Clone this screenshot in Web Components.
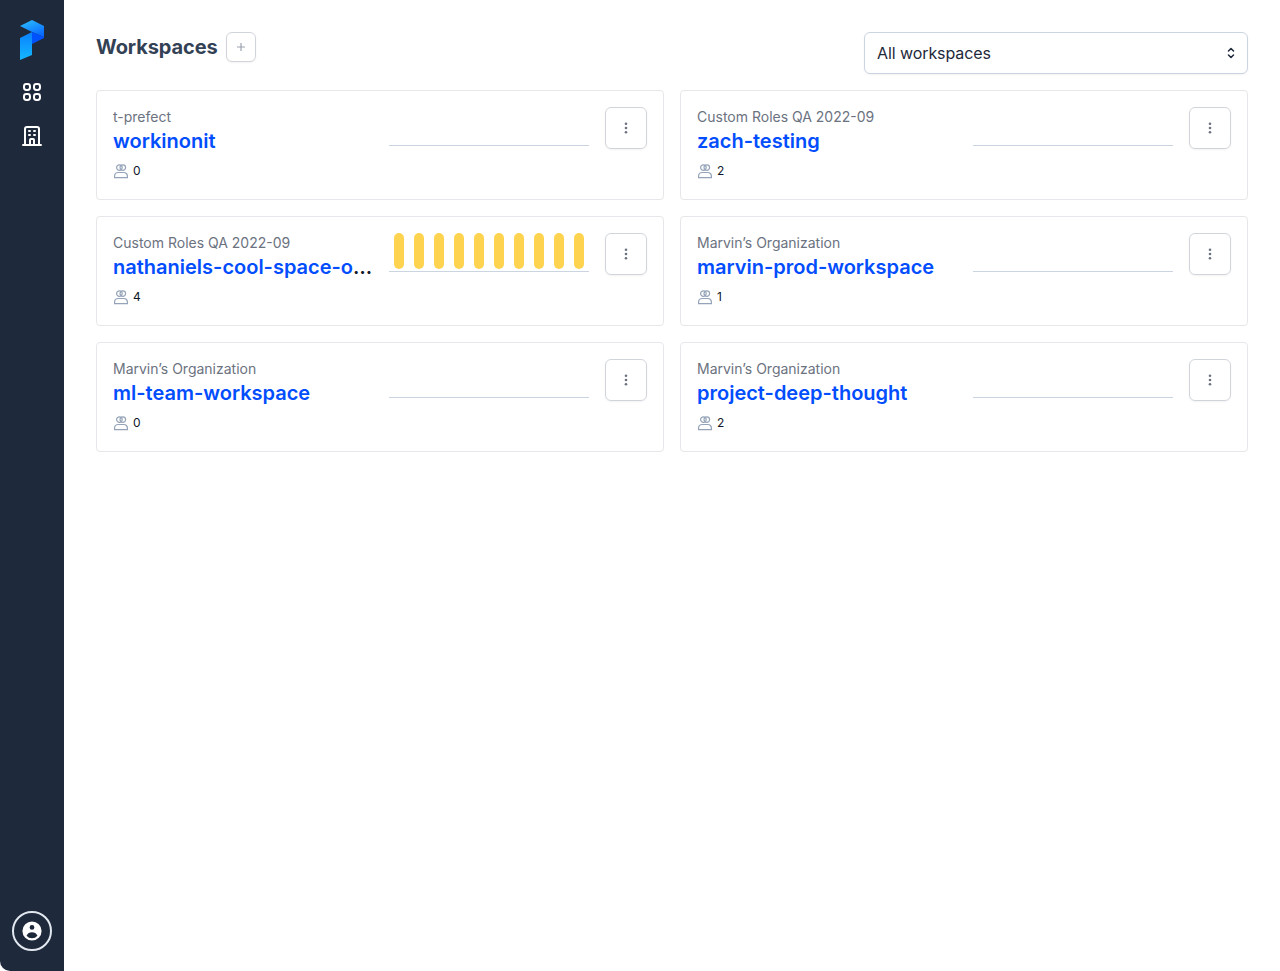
<!DOCTYPE html>
<html>
<head>
<meta charset="utf-8">
<style>
  html, body { margin: 0; height: 100%; background: #fff; }
  body { font-family: Inter, sans-serif; }
</style>
</head>
<body>
<app-shell>
  <side-nav slot="nav"></side-nav>
  <page-header></page-header>
  <workspace-grid>
    <workspace-card org="t-prefect" name="workinonit" members="0"></workspace-card>
    <workspace-card org="Custom Roles QA 2022-09" name="zach-testing" members="2"></workspace-card>
    <workspace-card org="Custom Roles QA 2022-09" name="nathaniels-cool-space-of-wonders" members="4" bars="10"></workspace-card>
    <workspace-card org="Marvin’s Organization" name="marvin-prod-workspace" members="1"></workspace-card>
    <workspace-card org="Marvin’s Organization" name="ml-team-workspace" members="0"></workspace-card>
    <workspace-card org="Marvin’s Organization" name="project-deep-thought" members="2"></workspace-card>
  </workspace-grid>
</app-shell>
<script>
class AppShell extends HTMLElement {
  constructor() {
    super();
    this.attachShadow({ mode: 'open' });
    this.shadowRoot.innerHTML = `
      <style>
        :host { display: flex; height: 971px; overflow: hidden; border-bottom-left-radius: 10px; }
        main { flex: 1; min-width: 0; padding: 32px 32px 0; }
      </style>
      <slot name="nav"></slot>
      <main><slot></slot></main>
    `;
  }
}

class SideNav extends HTMLElement {
  constructor() {
    super();
    this.attachShadow({ mode: 'open' });
    this.shadowRoot.innerHTML = `
      <style>
        :host { display: flex; flex-direction: column; align-items: center; width: 64px; flex: none; background: #1e293b; box-sizing: border-box; padding: 20px 0 20px; }
        svg { display: block; }
        .logo { margin-bottom: 20px; }
        .icon { margin-bottom: 20px; color: #fff; }
        .user { margin-top: auto; width: 40px; height: 40px; box-sizing: border-box; border: 2px solid #e2e8f0; border-radius: 50%; display: flex; align-items: center; justify-content: center; color: #fff; }
      </style>
      <svg class="logo" width="24" height="40" viewBox="0 0 24 40">
        <defs>
          <linearGradient id="a" x1="0" y1="0" x2="0.6" y2="1"><stop offset="0" stop-color="#2ec4ff"/><stop offset="1" stop-color="#0a6cff"/></linearGradient>
          <linearGradient id="b" x1="0.5" y1="0" x2="0.5" y2="1"><stop offset="0" stop-color="#0a80ff"/><stop offset="1" stop-color="#14b8ff"/></linearGradient>
        </defs>
        <path d="M0 6 L12 0 L24 6 L24 17 L12 12 Z" fill="url(#a)"/>
        <path d="M12 12 L24 17 L24 18 L12 24 Z" fill="#0052ff"/>
        <path d="M0 18 L12 12 L12 35 L0 40 Z" fill="url(#b)"/>
      </svg>
      <svg class="icon" width="24" height="24" viewBox="0 0 24 24" fill="none" stroke="currentColor" stroke-width="2">
        <rect x="4" y="4" width="6" height="6" rx="2.4"/><rect x="14" y="4" width="6" height="6" rx="2.4"/>
        <rect x="4" y="14" width="6" height="6" rx="2.4"/><rect x="14" y="14" width="6" height="6" rx="2.4"/>
      </svg>
      <svg class="icon" width="24" height="24" viewBox="0 0 24 24" fill="none" stroke="currentColor" stroke-width="2" stroke-linecap="round" stroke-linejoin="round">
        <path d="M19 21V5a2 2 0 0 0-2-2H7a2 2 0 0 0-2 2v16m14 0h2m-2 0h-5m-9 0H3m2 0h5M9 7h1m-1 4h1m4-4h1m-1 4h1m-5 10v-5a1 1 0 0 1 1-1h2a1 1 0 0 1 1 1v5m-4 0h4"/>
      </svg>
      <div class="user">
        <svg width="24" height="24" viewBox="0 0 20 20" fill="currentColor">
          <path fill-rule="evenodd" d="M18 10a8 8 0 1 1-16 0 8 8 0 0 1 16 0zm-6-3a2 2 0 1 1-4 0 2 2 0 0 1 4 0zm-2 4a5 5 0 0 0-4.546 2.916A5.986 5.986 0 0 0 10 16a5.986 5.986 0 0 0 4.546-2.084A5 5 0 0 0 10 11z" clip-rule="evenodd"/>
        </svg>
      </div>
    `;
  }
}

class PageHeader extends HTMLElement {
  constructor() {
    super();
    this.attachShadow({ mode: 'open' });
    this.shadowRoot.innerHTML = `
      <style>
        :host { display: flex; justify-content: space-between; align-items: flex-start; height: 42px; margin-bottom: 16px; }
        .title { display: flex; align-items: center; gap: 8px; height: 30px; }
        h1 { margin: 0; font: 700 20px/30px Inter, sans-serif; color: #334155; letter-spacing: -0.1px; }
        .add { width: 30px; height: 30px; box-sizing: border-box; border: 1px solid #d1d5db; border-radius: 6px; background: #fff; display: flex; align-items: center; justify-content: center; color: #9ca3af; box-shadow: 0 1px 2px rgba(0,0,0,.05); }
        .select { width: 384px; height: 42px; box-sizing: border-box; border: 1px solid #cbd5e1; border-radius: 6px; background: #fff; display: flex; align-items: center; justify-content: space-between; padding: 0 8px 0 12px; font: 400 16px/24px Inter, sans-serif; color: #1e293b; letter-spacing: -0.08px; box-shadow: 0 1px 2px rgba(0,0,0,.05); }
        svg { display: block; }
      </style>
      <div class="title">
        <h1>Workspaces</h1>
        <div class="add">
          <svg width="12" height="12" viewBox="0 0 12 12" fill="none" stroke="currentColor" stroke-width="1.2"><path d="M6 2v8M2 6h8"/></svg>
        </div>
      </div>
      <div class="select">
        <span>All workspaces</span>
        <svg width="16" height="16" viewBox="0 0 16 16" fill="none" stroke="#1e293b" stroke-width="1.5" stroke-linecap="round" stroke-linejoin="round"><path d="M5.5 6 8 3.5 10.5 6M5.5 10 8 12.5 10.5 10"/></svg>
      </div>
    `;
  }
}

class WorkspaceGrid extends HTMLElement {
  constructor() {
    super();
    this.attachShadow({ mode: 'open' });
    this.shadowRoot.innerHTML = `
      <style>
        :host { display: grid; grid-template-columns: repeat(2, minmax(0, 1fr)); gap: 16px; }
      </style>
      <slot></slot>
    `;
  }
}

class WorkspaceCard extends HTMLElement {
  constructor() {
    super();
    this.attachShadow({ mode: 'open' });
  }

  connectedCallback() {
    const org = this.getAttribute('org');
    const name = this.getAttribute('name');
    const members = this.getAttribute('members');
    const bars = parseInt(this.getAttribute('bars')) || 0;
    let barHtml = '';
    for (let i = 0; i < bars; i++) barHtml += '<i></i>';

    this.shadowRoot.innerHTML = `
      <style>
        :host { display: flex; box-sizing: border-box; height: 110px; min-width: 0; border: 1px solid #e5e7eb; border-radius: 4px; background: #fff; padding: 16px; }
        .info { flex: 1; min-width: 0; }
        .org { font: 400 14px/20px Inter, sans-serif; color: #6b7280; }
        .name { font: 600 20px/28px Inter, sans-serif; color: #111827; white-space: nowrap; overflow: hidden; text-overflow: ellipsis; }
        .name a { color: #024dfd; text-decoration: none; }
        .members { display: flex; align-items: center; gap: 4px; margin-top: 8px; font: 400 12px/16px Inter, sans-serif; color: #0f172a; }
        .chart { flex: none; width: 200px; height: 39px; margin-left: 16px; border-bottom: 1px solid #cbd5e1; display: flex; justify-content: space-between; align-items: flex-start; padding: 0 5px 0; box-sizing: border-box; }
        .chart i { display: block; width: 10px; height: 36px; border-radius: 5px; background: #fdd34f; }
        .menu { flex: none; width: 42px; height: 42px; box-sizing: border-box; margin-left: 16px; border: 1px solid #d1d5db; border-radius: 6px; display: flex; align-items: center; justify-content: center; color: #6b7280; box-shadow: 0 1px 2px rgba(0,0,0,.05); }
        svg { display: block; }
      </style>
      <div class="info">
        <div class="org">${org}</div>
        <div class="name"><a>${name}</a></div>
        <div class="members">
          <svg width="16" height="16" viewBox="0 0 16 16" fill="none" stroke="#94a3b8" stroke-width="1.2"><circle cx="6.4" cy="4.6" r="2.8"/><circle cx="9.8" cy="4.6" r="2.8"/><path d="M1.6 14.6v-1.6a3.5 3.5 0 0 1 3.5-3.5h5.8a3.5 3.5 0 0 1 3.5 3.5v1.6z"/></svg>
          <span>${members}</span>
        </div>
      </div>
      <div class="chart">${barHtml}</div>
      <div class="menu">
        <svg width="16" height="16" viewBox="0 0 16 16" fill="currentColor"><circle cx="8" cy="3.7" r="1.3"/><circle cx="8" cy="8" r="1.3"/><circle cx="8" cy="12.3" r="1.3"/></svg>
      </div>
    `;
  }
}

customElements.define('app-shell', AppShell);
customElements.define('side-nav', SideNav);
customElements.define('page-header', PageHeader);
customElements.define('workspace-grid', WorkspaceGrid);
customElements.define('workspace-card', WorkspaceCard);
</script>
</body>
</html>
